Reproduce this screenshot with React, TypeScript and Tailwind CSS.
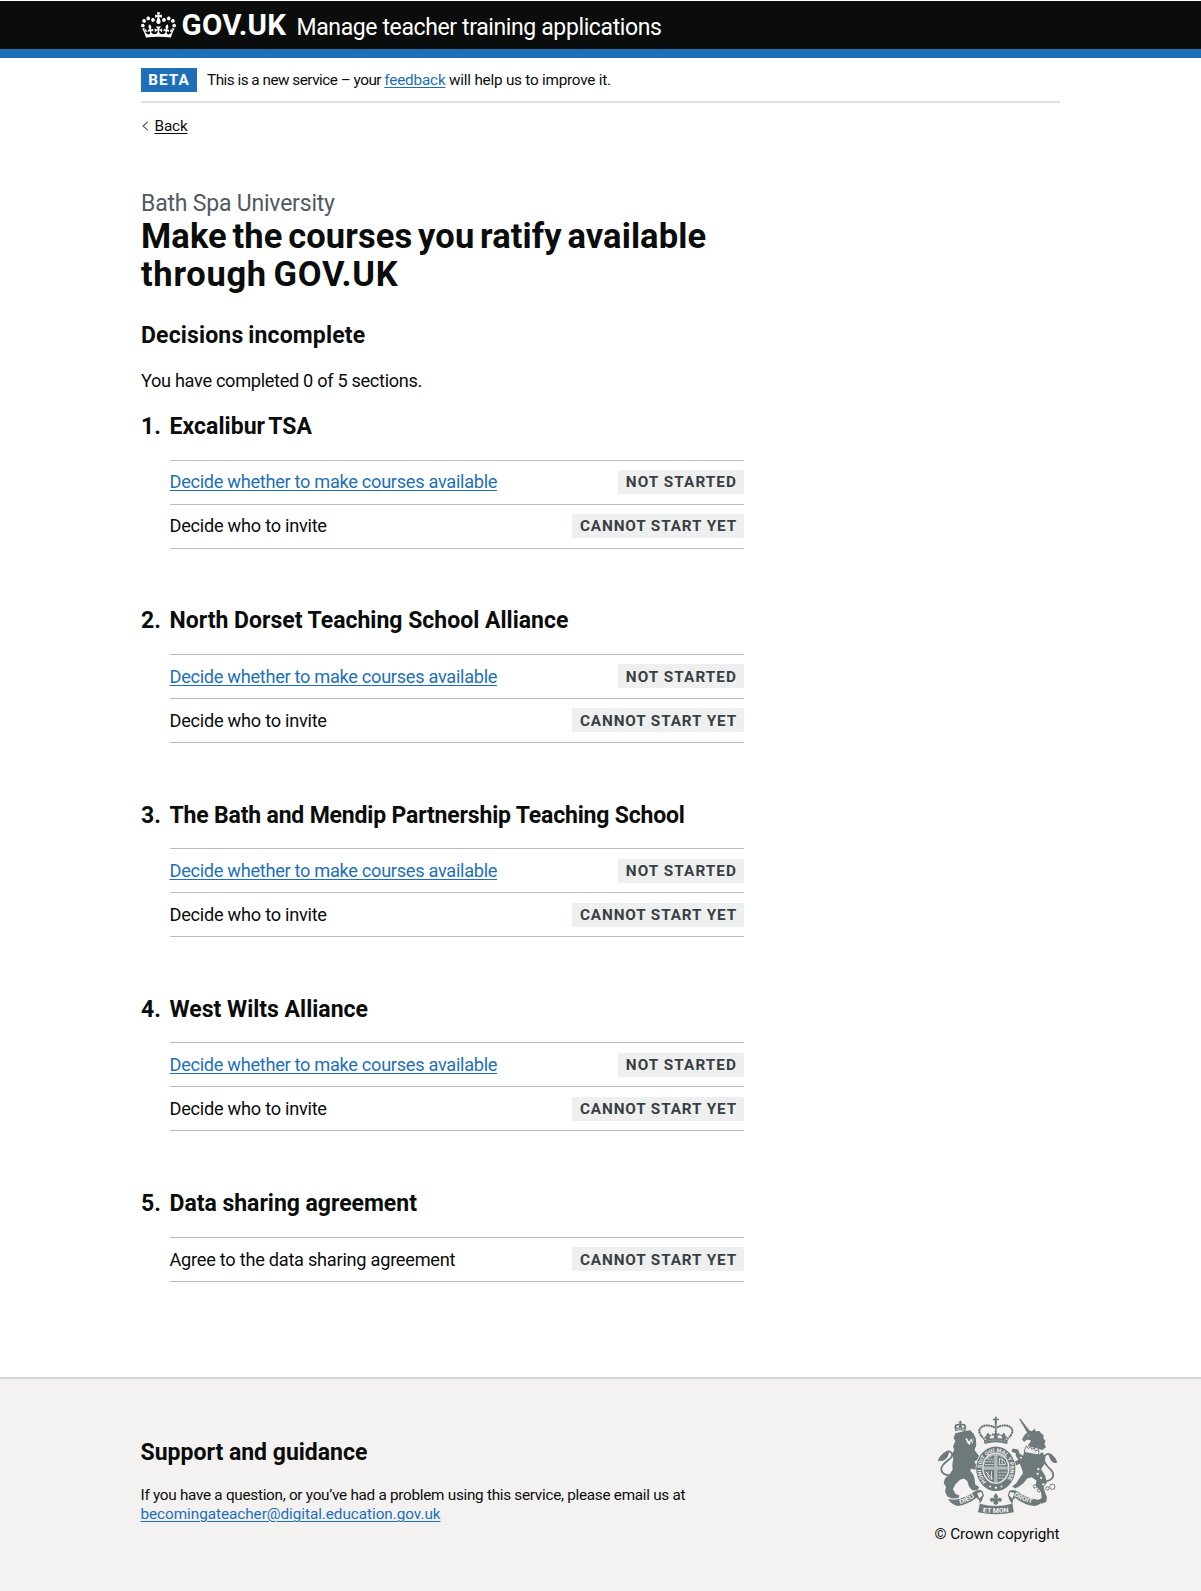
type Status = "NOT STARTED" | "CANNOT START YET";
type Task = { label: string; link?: boolean; status: Status };
type Section = { title: string; titleClass: string; tasks: Task[] };

const courseTasks: Task[] = [
  { label: "Decide whether to make courses available", link: true, status: "NOT STARTED" },
  { label: "Decide who to invite", status: "CANNOT START YET" },
];

const sections: Section[] = [
  { title: "Excalibur TSA", titleClass: "tracking-[0.05px] [word-spacing:-2px]", tasks: courseTasks },
  { title: "North Dorset Teaching School Alliance", titleClass: "tracking-[0px]", tasks: courseTasks },
  { title: "The Bath and Mendip Partnership Teaching School", titleClass: "tracking-[-0.18px]", tasks: courseTasks },
  { title: "West Wilts Alliance", titleClass: "tracking-[0px]", tasks: courseTasks },
  {
    title: "Data sharing agreement",
    titleClass: "tracking-[-0.02px]",
    tasks: [{ label: "Agree to the data sharing agreement", status: "CANNOT START YET" }],
  },
];

function Crown() {
  return (
    <svg viewBox="0 0 132 97" className="h-[26px] w-[35px] shrink-0" fill="currentColor" aria-hidden="true">
      <path d="M25 30.2c3.5 1.5 7.7-.2 9.1-3.7 1.5-3.6-.2-7.8-3.9-9.2-3.6-1.4-7.6.3-9.1 3.9-1.4 3.5.3 7.5 3.9 9zM9 39.5c3.6 1.5 7.8-.2 9.2-3.7 1.5-3.6-.2-7.8-3.9-9.1-3.6-1.5-7.6.2-9.1 3.8-1.4 3.5.3 7.5 3.8 9zM4.4 57.2c3.5 1.5 7.7-.2 9.1-3.8 1.5-3.6-.2-7.7-3.9-9.1-3.5-1.5-7.6.3-9.1 3.8-1.4 3.5.3 7.6 3.9 9.1zm38.3-21.4c3.5 1.5 7.7-.2 9.1-3.8 1.5-3.6-.2-7.7-3.9-9.1-3.6-1.5-7.6.3-9.1 3.8-1.3 3.6.4 7.7 3.9 9.1zm64.4-5.6c-3.6 1.5-7.8-.2-9.1-3.7-1.5-3.6.2-7.8 3.8-9.2 3.6-1.4 7.7.3 9.2 3.9 1.3 3.5-.4 7.5-3.9 9zm15.9 9.3c-3.6 1.5-7.7-.2-9.1-3.7-1.5-3.6.2-7.8 3.7-9.1 3.6-1.5 7.7.2 9.2 3.8 1.5 3.5-.3 7.5-3.8 9zm4.7 17.7c-3.6 1.5-7.8-.2-9.2-3.8-1.5-3.6.2-7.7 3.9-9.1 3.6-1.5 7.7.3 9.2 3.8 1.3 3.5-.4 7.6-3.9 9.1zM89.3 35.8c-3.6 1.5-7.8-.2-9.2-3.8-1.4-3.6.2-7.7 3.9-9.1 3.6-1.5 7.7.3 9.2 3.8 1.4 3.6-.3 7.7-3.9 9.1zM69.7 17.7l8.9 4.7V9.3l-8.9 2.8c-.2-.3-.5-.6-.9-.9L72.4 0H59.6l3.5 11.2c-.3.3-.6.5-.9.9l-8.8-2.8v13.1l8.8-4.7c.3.3.6.7.9.9l-5 15.4v.1c-.2.8-.4 1.6-.4 2.4 0 4.1 3.1 7.5 7 8.1h.2c.3 0 .7.1 1 .1.4 0 .7 0 1-.1h.2c4-.6 7.1-4.1 7.1-8.1 0-.8-.1-1.7-.4-2.4V34l-5.1-15.4c.4-.2.7-.6 1-.9zM66 92.8c16.9 0 32.8 1.1 47.1 3.2 4-16.9 8.9-26.7 14-33.5l-9.6-3.4c1 4.9 1.1 7.2 0 10.2-1.5-1.4-3-4.3-4.2-8.7L108.6 76c2.8-2 5-3.2 7.5-3.3-4.4 9.4-10 11.9-13.6 11.2-4.3-.8-6.3-4.6-5.6-7.9 1-4.7 5.7-5.9 8-.5 4.3-8.7-3-11.4-7.6-8.8 7.1-7.2 7.9-13.5 2.1-21.1-8 6.1-8.1 12.3-4.5 20.8-4.7-5.4-12.1-2.5-9.5 6.2 3.4-5.2 7.9-2 7.2 3.1-.6 4.3-6.4 7.8-13.5 7.2-10.3-.9-10.9-8-11.2-13.8 2.5-.5 7.1 1.8 11 7.3L80.2 60c-4.1 4.4-8 5.3-12.3 5.4 1.4-4.4 8-11.6 8-11.6H55.5s6.4 7.2 7.9 11.6c-4.2-.1-8-1-12.3-5.4l1.4 16.4c3.9-5.5 8.5-7.7 10.9-7.3-.3 5.8-.9 12.8-11.1 13.8-7.2.6-12.9-2.9-13.5-7.2-.7-5 3.8-8.3 7.1-3.1 2.7-8.7-4.6-11.6-9.4-6.2 3.7-8.5 3.6-14.7-4.6-20.8-5.8 7.6-5 13.9 2.2 21.1-4.7-2.6-11.9.1-7.7 8.8 2.3-5.5 7.1-4.2 8.1.5.7 3.3-1.3 7.1-5.7 7.9-3.5.7-9-1.8-13.5-11.2 2.5.1 4.7 1.3 7.5 3.3l-4.7-15.4c-1.2 4.4-2.7 7.2-4.3 8.7-1.1-3-.9-5.3 0-10.2l-9.5 3.4c5 6.9 9.9 16.7 14 33.5 14.8-2.1 30.8-3.2 47.7-3.2z" />
    </svg>
  );
}

const ink = "#6d797b";
const paper = "#f3f2f1";

function RoyalArms() {
  return (
    <svg viewBox="50 138 362 298" className="h-[99px] w-[121px] overflow-visible" fill={ink} aria-hidden="true">
      <defs>
        <path id="garter" d="M197 336 A44 51 0 1 1 255 336" />
        <path id="scrollLeft" d="M118 403 Q146 396 170 375" />
        <path id="scrollMid" d="M187 427 Q226 432 266 427" />
        <path id="scrollRight" d="M280 377 Q306 396 340 402" />
      </defs>

      {/* lion */}
      <path d="M104 190 L99 204 L104 214 L97 230 L101 240 L94 252 L98 268 L95 284 L96 300 L86 314 L73 326 L69 340 L76 352 L73 366 L80 380 L94 386 L114 385 L116 377 L104 372 L97 358 L104 344 L118 330 L130 326 L140 334 L146 352 L156 362 L172 360 L176 352 L164 344 L162 328 L158 314 L150 304 L150 296 L164 300 L180 296 L184 286 L176 278 L164 282 L162 274 L174 270 L180 262 L170 252 L162 240 L167 226 L166 206 L158 190 L148 181 L128 184 Z" />
      <path d="M134 206 L140 204 L147 208 L159 205 L161 209 L156 214 L158 220 L150 220 L146 225 L141 220 Z" fill={paper} />
      <path d="M136 198 L147 202 L150 210 L144 214 Z M152 206 L160 206 L157 214 Z M148 216 L156 215 L152 222 Z" />
      <path d="M104 184 L101 170 Q103 160 112 162 Q119 157 126 162 Q135 160 137 170 L134 184 Q119 178 104 184 Z" />
      <path d="M117 152h4v3h3v3h-3v4h-4v-4h-3v-3h3z" />
      <path d="M106 172 Q109 165 115 166 L114 174 Z M123 166 Q130 165 132 172 L124 174 Z" fill={paper} />
      <path d="M106 179 Q119 174 132 179" fill="none" stroke={paper} strokeWidth="1.8" />
      <path d="M84 316 C62 314 56 298 68 284 C82 268 102 262 92 248 C84 240 72 246 66 262" fill="none" stroke={ink} strokeWidth="5.5" />
      <path d="M51 276 Q54 254 84 242 Q88 258 72 270 Q62 276 58 272 Z" />

      {/* crown over the shield */}
      <path d="M223 140h6v6h6v5h-6v8h-6v-8h-6v-5h6z" />
      <g fill="none" stroke={ink} strokeWidth="7" strokeDasharray="0.1 7.2" strokeLinecap="round">
        <path d="M190 206 C156 176 192 156 222 172" />
        <path d="M262 206 C296 176 260 156 230 172" />
        <path d="M226 162 V188" />
      </g>
      <path d="M226 184l5 8 6-3v9l-6-2 1 10h-12l1-10-6 2v-9l6 3z" />
      <path d="M203 188l4 7 6-2-2 7-4-1 1 8-12 2-4-10 6 1-1-6z M249 188l-4 7-6-2 2 7 4-1-1 8 12 2 4-10-6 1 1-6z" />
      <path d="M190 210 Q226 199 262 210 L260 222 Q226 212 192 222 Z" />
      <path d="M196 215 Q226 206 256 215" stroke={paper} strokeWidth="1.6" strokeDasharray="5 4" fill="none" />

      {/* unicorn */}
      <path d="M296 147 L300 146 L327 182 L320 188 Z" />
      <path d="M318 190 L326 181 L334 184 L344 176 L345 184 L357 183 L362 190 L370 196 L369 205 L376 214 L372 222 L377 232 L366 240 L322 228 L332 212 L320 209 L311 216 L305 209 L311 197 Z" />
      <circle cx="324" cy="197" r="1.8" fill={paper} />
      <path d="M312 244 L330 250 L356 254 L366 246 L375 262 L373 282 L362 298 L374 316 L380 338 L370 352 L374 368 L380 382 L378 396 L364 402 L352 394 L364 384 L362 366 L346 348 L348 332 L334 322 L320 326 L310 340 L296 350 L284 356 L275 350 L288 340 L298 324 L308 310 L304 296 L298 282 L284 288 L280 300 L272 292 L277 278 L294 270 L286 258 L286 250 L273 245 L277 236 L293 239 L298 252 L308 258 Z" />
      <path d="M318 228 l5 8 7-6 4 9 8-5 3 10 9-5 2 8-3 8-34-6-8-5z" stroke={ink} strokeWidth="3" fill={paper} />
      <path d="M378 334 C400 330 404 314 392 300 C376 286 366 272 372 260 C380 246 396 252 399 268" fill="none" stroke={ink} strokeWidth="5.5" />
      <path d="M384 254 Q406 256 411 278 Q398 284 390 268 Z" />
      <g fill="none" stroke={ink} strokeWidth="3">
        <circle cx="344" cy="350" r="5" />
        <circle cx="356" cy="362" r="5" />
        <circle cx="381" cy="356" r="5" />
        <circle cx="396" cy="351" r="8" />
      </g>
      <g fill={paper}>
        <circle cx="354" cy="298" r="3.5" />
        <circle cx="352" cy="312" r="3.5" />
        <circle cx="362" cy="324" r="3.5" />
        <circle cx="369" cy="344" r="3.5" />
        <circle cx="302" cy="264" r="3" />
      </g>

      {/* garter and shield */}
      <ellipse cx="226" cy="297" rx="61" ry="69" fill={paper} />
      <ellipse cx="226" cy="297" rx="59" ry="67" />
      <ellipse cx="226" cy="295" rx="41" ry="47" fill={paper} />
      <ellipse cx="226" cy="295" rx="38" ry="44" fill="#b3b9ba" />
      <path d="M196 268 l25-12 v34 h-31z M231 256 l25 12 6 22 h-31z M190 300 h31 v38 q-26-8-31-38z M231 300 h31 q-5 30-31 38z" />
      <g stroke={paper} strokeWidth="2.5" fill="none">
        <path d="M200 268h20M196 276h24M194 284h26M234 307h24M234 316h20M234 325h15" strokeDasharray="7 2" />
        <path d="M237 266 Q254 268 255 284 L236 285 Z M245 270 V282 M203 305 Q199 320 209 328 M213 304 V330 M196 306 L217 328" />
      </g>
      <text fill={paper} fontFamily="Roboto, sans-serif" fontWeight="700" fontSize="16">
        <textPath href="#garter" textLength="224" lengthAdjust="spacingAndGlyphs">
          HONI SOIT QUI MAL Y PENSE
        </textPath>
      </text>
      <g fill={paper}>
        <circle cx="209" cy="350" r="3" />
        <circle cx="226" cy="354" r="3.5" />
        <circle cx="243" cy="350" r="3" />
      </g>

      {/* motto scroll */}
      <path d="M82 388 L100 390 Q136 386 166 362 Q178 358 186 364 L190 378 L174 390 L168 384 Q142 404 112 409 Q94 406 82 388 Z" />
      <path d="M370 388 L352 390 Q316 386 286 362 Q274 358 266 364 L262 378 L278 390 L284 384 Q312 406 342 409 Q362 406 370 388 Z" />
      <path d="M172 376 Q182 366 190 376 Q186 392 178 402 Q226 416 274 402 Q266 392 262 376 Q272 366 280 376 L276 402 L280 428 Q226 440 172 428 L178 402 Z" />
      <path d="M170 370 L183 367 L186 377 L176 386 Z M282 370 L269 367 L266 377 L276 386 Z" fill={paper} />
      <path d="M226 370 l7 10-3 8 8-5 7 6-5 8-8-3 2 7-8 6-8-6 2-7-8 3-5-8 7-6 8 5-3-8z" />
      <g fill={paper} fontFamily="Roboto, sans-serif" fontWeight="700" fontSize="19">
        <text>
          <textPath href="#scrollLeft" textLength="50" lengthAdjust="spacingAndGlyphs">DIEU</textPath>
        </text>
        <text>
          <textPath href="#scrollMid" textLength="78" lengthAdjust="spacingAndGlyphs">ET MON</textPath>
        </text>
        <text>
          <textPath href="#scrollRight" textLength="60" lengthAdjust="spacingAndGlyphs">DROIT</textPath>
        </text>
      </g>
    </svg>
  );
}

function Tag({ status }: { status: Status }) {
  return (
    <strong
      className={
        "flex h-6 items-center bg-[#eeefef] pt-[2px] pr-[7px] pl-2 text-[15.3px] leading-none font-bold whitespace-nowrap text-[#383f43] " +
        (status === "NOT STARTED" ? "tracking-[1.06px]" : "tracking-[0.87px]")
      }
    >
      {status}
    </strong>
  );
}

function TaskRow({ task }: { task: Task }) {
  return (
    <li className="flex h-[44px] items-center justify-between border-b border-[#b9bcbe] text-[18.2px]">
      {task.link ? (
        <a href="#" className="tracking-[-0.3px] text-[#1d70b8] underline decoration-1 underline-offset-2">
          {task.label}
        </a>
      ) : (
        <span className="tracking-[-0.26px]">{task.label}</span>
      )}
      <Tag status={task.status} />
    </li>
  );
}

export default function App() {
  return (
    <div className="flex min-h-[1591px] flex-col bg-white pt-px font-['Roboto',sans-serif] text-[#0b0c0c] antialiased">
      <header className="h-[57px] border-b-[9px] border-[#1d70b8] bg-[#0b0c0c] text-white">
        <div className="mx-auto flex h-12 w-[920px] items-center">
          <Crown />
          <span className="mt-px ml-[6px] w-[106px] text-[29.5px] leading-none font-bold tracking-[0.3px]">GOV.UK</span>
          <span className="mt-1 ml-[9px] text-[23px] leading-none tracking-[-0.38px] whitespace-nowrap">
            Manage teacher training applications
          </span>
        </div>
      </header>

      <main className="mx-auto w-[919px] grow">
        <div className="flex h-[45px] items-center border-b-2 border-[#dedfe0] text-[15.3px]">
          <strong className="mr-[10px] flex h-6 w-[56px] items-center justify-center bg-[#1d70b8] pt-[2px] text-[15.3px] leading-none tracking-[0.95px] text-white">
            BETA
          </strong>
          <span className="pt-[2px] tracking-[-0.23px]">
            <span className="tracking-[-0.5px]">This is a new service – your </span>
            <a href="#" className="tracking-[-0.18px] text-[#1d70b8] underline decoration-1 underline-offset-2">
              feedback
            </a>{" "}
            will help us to improve it.
          </span>
        </div>

        <a href="#" className="mt-[13px] flex h-5 items-center text-[15.3px] tracking-[-0.15px]">
          <svg viewBox="0 0 8 12" className="mr-[5.5px] ml-px h-3 w-[7px]" fill="none" stroke="#505a5f" strokeWidth="1.3">
            <path d="M6.8 1 1.2 6l5.6 5" />
          </svg>
          <span className="underline decoration-1 underline-offset-2">Back</span>
        </a>

        <div className="mt-[54px] w-[603px]">
          <p className="text-[23px] leading-7 tracking-[-0.2px] text-[#505a5f]">Bath Spa University</p>
          <h1 className="text-[34.5px] leading-[37.5px] font-bold">
            <span className="block tracking-[0.11px] whitespace-nowrap [word-spacing:-3px]">
              Make the courses you ratify available
            </span>
            <span className="block tracking-[0.7px] [word-spacing:-2.5px]">through GOV.UK</span>
          </h1>
          <h2 className="mt-[29px] text-[23px] leading-7 font-bold tracking-[0.15px] [word-spacing:-1px]">
            Decisions incomplete
          </h2>
          <p className="mt-[19px] text-[18.2px] leading-6 tracking-[-0.33px]">You have completed 0 of 5 sections.</p>

          <ol className="mt-5">
            {sections.map((section, index) => (
              <li key={section.title} className="h-[194.3px] last:h-auto">
                <h2 className="flex text-[23px] leading-7 font-bold">
                  <span className="w-[28.5px]">{index + 1}.</span>
                  <span className={section.titleClass}>{section.title}</span>
                </h2>
                <ul className="mt-[18.5px] ml-[28.5px] border-t border-[#b9bcbe]">
                  {section.tasks.map((task) => (
                    <TaskRow key={task.label} task={task} />
                  ))}
                </ul>
              </li>
            ))}
          </ol>
        </div>
      </main>

      <footer className="h-[214px] shrink-0 border-t-2 border-[#d5d7d8] bg-[#f3f2f1]">
        <div className="mx-auto flex w-[920px] items-start justify-between">
          <div className="pt-[60px]">
            <h2 className="text-[23px] leading-7 font-bold">Support and guidance</h2>
            <p className="mt-[19px] text-[15.3px] leading-[19px]">
              <span className="block tracking-[-0.28px]">
                If you have a question, or you’ve had a problem using this service, please email us at
              </span>
              <a href="#" className="tracking-[-0.05px] text-[#1d70b8] underline decoration-1 underline-offset-2">
                becomingateacher@digital.education.gov.uk
              </a>
            </p>
          </div>
          <div className="flex flex-col items-center pt-[37px] pr-px">
            <RoyalArms />
            <p className="mt-[9px] text-[15.3px] leading-5 tracking-[-0.1px]">© Crown copyright</p>
          </div>
        </div>
      </footer>
    </div>
  );
}
